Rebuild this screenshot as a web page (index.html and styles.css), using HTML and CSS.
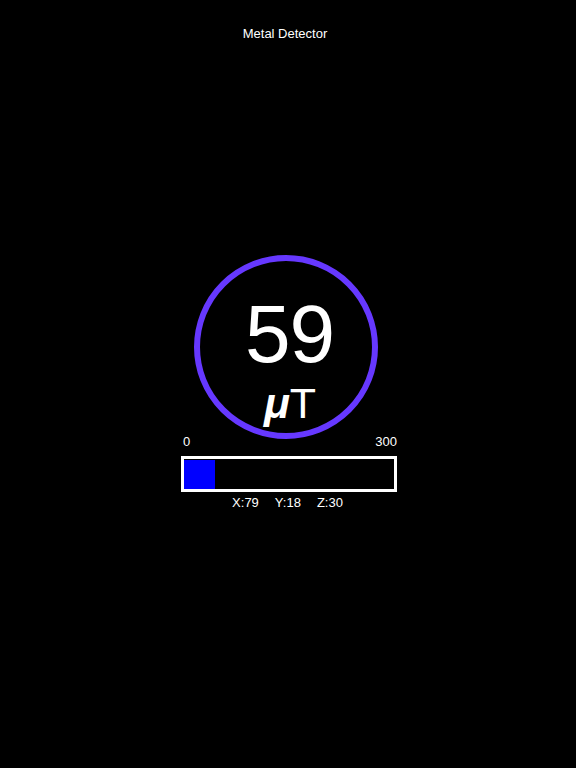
FILE: index.html
```html
<!DOCTYPE html>
<html>
<head>
<meta charset="utf-8">
<link rel="stylesheet" href="styles.css">
</head>
<body>
<div class="page">
  <div class="title">Metal Detector</div>
  <div class="meter">
    <div class="circle">
      <div class="value">59</div>
      <div class="unit"><span class="mu">μ</span>T</div>
    </div>
    <div class="scale">
      <span>0</span>
      <span>300</span>
    </div>
    <div class="bar">
      <div class="fill" style="width: 31px"></div>
    </div>
    <div class="axes">
      <span>X:79</span>
      <span>Y:18</span>
      <span>Z:30</span>
    </div>
  </div>
</div>
</body>
</html>
```
FILE: styles.css
```css
html, body {
  margin: 0;
  padding: 0;
  background: #000;
}
body {
  width: 576px;
  height: 768px;
  overflow: hidden;
  font-family: "Liberation Sans", Arial, sans-serif;
  color: #fff;
}
.page {
  padding-top: 26px;
}
.title {
  font-size: 13px;
  line-height: 16px;
  text-align: center;
  padding-right: 6px;
}
.meter {
  margin-top: 213px;
  margin-left: 181px;
  width: 216px;
  display: flex;
  flex-direction: column;
}
.circle {
  width: 184px;
  height: 184px;
  margin-left: 13px;
  box-sizing: border-box;
  border: 6px solid #6638ff;
  border-radius: 50%;
  display: flex;
  flex-direction: column;
  align-items: center;
  padding-top: 32px;
}
.value {
  font-size: 82px;
  line-height: 82px;
  padding-left: 7px;
  letter-spacing: -1px;
}
.unit {
  margin-top: 7px;
  font-size: 43px;
  line-height: 43px;
  padding-left: 8px;
}
.mu {
  font-style: italic;
  font-weight: bold;
}
.scale {
  margin-top: -5px;
  display: flex;
  justify-content: space-between;
  font-size: 13px;
  line-height: 16px;
  padding-left: 2px;
}
.bar {
  margin-top: 6px;
  height: 36px;
  box-sizing: border-box;
  border: 3px solid #fff;
  padding: 1px 0 0 0;
  display: flex;
}
.fill {
  background: #0000ff;
  height: 29px;
}
.axes {
  margin-top: 3px;
  display: flex;
  justify-content: center;
  gap: 16px;
  font-size: 13px;
  line-height: 16px;
  padding-right: 3px;
}
```
